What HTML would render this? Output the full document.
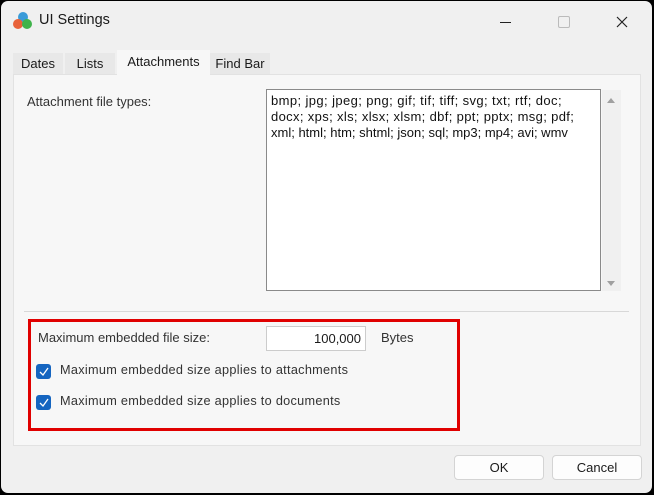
<!DOCTYPE html>
<html><head><style>
body{margin:0;width:654px;height:495px;background:#000;font-family:"Segoe UI","Liberation Sans",sans-serif;font-size:12px;color:#1a1a1a;overflow:hidden;position:relative}
.win{position:absolute;left:1px;top:1px;width:651px;height:492px;background:#f0f0f0;border-radius:7px;overflow:hidden}
.a{position:absolute}
.tab{position:absolute;top:52px;height:21px;background:#e8e8e8;font-size:13px;line-height:21px;text-align:center}
.panel{position:absolute;left:12px;top:73px;width:628px;height:372px;background:#f7f7f7;border:1px solid #e2e2e2;box-sizing:border-box}
.btn{position:absolute;top:454px;height:25px;background:#fdfdfd;border:1px solid #d4d4d4;border-radius:4px;box-sizing:border-box;text-align:center;line-height:23px;font-size:13px}
.cb{position:absolute;left:35px;width:15px;height:15px;background:#1565c0;border-radius:3px}
.lbl{position:absolute;font-size:13px;color:#333;white-space:nowrap}
</style></head><body>
<div class="win">
<svg class="a" style="left:11px;top:10px" width="22" height="20"><circle cx="11" cy="6" r="5" fill="#3a9bd9"/><circle cx="6" cy="13" r="5" fill="#e8623a"/><circle cx="15" cy="13" r="5" fill="#3fb34a"/></svg>
<div class="a" style="left:38px;top:11px;font-size:14.5px">UI Settings</div>
<div class="a" style="left:499px;top:21px;width:11px;height:1px;background:#222"></div>
<div class="a" style="left:557px;top:15px;width:10px;height:10px;border:1px solid #bbb;border-radius:2px"></div>
<svg class="a" style="left:615px;top:15px" width="12" height="12"><path d="M1 1L11 11M11 1L1 11" stroke="#222" stroke-width="1.2"/></svg>
<div class="tab" style="left:12px;width:50px">Dates</div>
<div class="tab" style="left:64px;width:50px">Lists</div>
<div class="tab" style="left:209px;width:60px">Find Bar</div>
<div class="panel"></div>
<div class="tab" style="left:116px;top:49px;width:93px;height:26px;background:#f7f7f7;line-height:24px">Attachments</div>
<div class="lbl" style="left:26px;top:93px">Attachment file types:</div>
<div class="a" style="left:265px;top:88px;width:335px;height:202px;background:#fff;border:1px solid #8a8a8a;box-sizing:border-box;padding:3px 4px;font-size:13px;line-height:16px;color:#111;white-space:nowrap"><span style="letter-spacing:0.4px">bmp; jpg; jpeg; png; gif; tif; tiff; svg; txt; rtf; doc;</span><br><span style="letter-spacing:0.35px">docx; xps; xls; xlsx; xlsm; dbf; ppt; pptx; msg; pdf;</span><br>xml; html; htm; shtml; json; sql; mp3; mp4; avi; wmv</div>
<div class="a" style="left:601px;top:89px;width:19px;height:201px;background:#f0f0f0"></div>
<svg class="a" style="left:605px;top:95px" width="10" height="8"><path d="M1 7L5 2L9 7Z" fill="#a0a0a0"/></svg>
<svg class="a" style="left:605px;top:279px" width="10" height="8"><path d="M1 1L5 6L9 1Z" fill="#a0a0a0"/></svg>
<div class="a" style="left:23px;top:310px;width:605px;height:1px;background:#d8d8d8"></div>
<div class="a" style="left:27px;top:318px;width:432px;height:112px;border:3px solid #e00000;box-sizing:border-box"></div>
<div class="lbl" style="left:37px;top:329px">Maximum embedded file size:</div>
<div class="a" style="left:265px;top:325px;width:100px;height:25px;background:#fff;border:1px solid #ccc;box-sizing:border-box;text-align:right;padding-right:4px;line-height:23px;font-size:13px">100,000</div>
<div class="lbl" style="left:380px;top:329px">Bytes</div>
<div class="cb" style="top:363px"></div>
<svg class="a" style="left:38px;top:366px" width="10" height="9"><path d="M1 5L4 8L9 1" stroke="#fff" fill="none" stroke-width="1.3"/></svg>
<div class="lbl" style="left:59px;top:362px;letter-spacing:0.3px;font-size:12.7px">Maximum embedded size applies to attachments</div>
<div class="cb" style="top:394px"></div>
<svg class="a" style="left:38px;top:397px" width="10" height="9"><path d="M1 5L4 8L9 1" stroke="#fff" fill="none" stroke-width="1.3"/></svg>
<div class="lbl" style="left:59px;top:393px;letter-spacing:0.3px;font-size:12.7px">Maximum embedded size applies to documents</div>
<div class="btn" style="left:453px;width:90px">OK</div>
<div class="btn" style="left:551px;width:90px">Cancel</div>
</div>
</body></html>
